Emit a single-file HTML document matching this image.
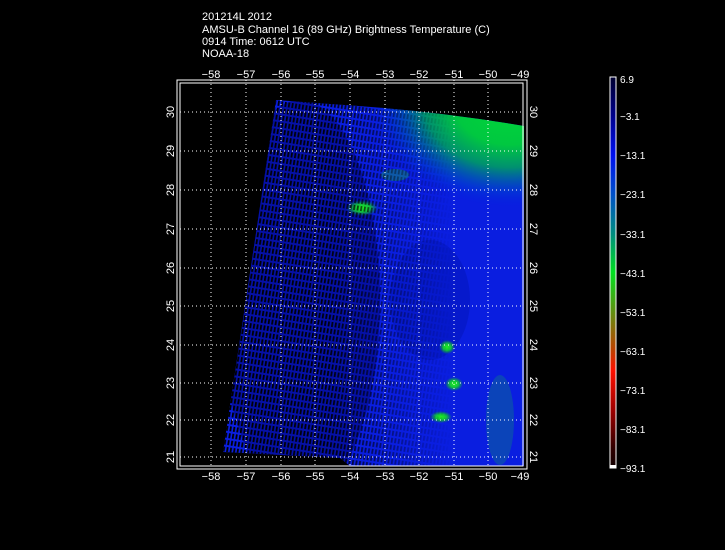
<!DOCTYPE html>
<html><head><meta charset="utf-8"><style>
html,body{margin:0;padding:0;background:#000;}
body{width:725px;height:550px;overflow:hidden;position:relative;}
</style></head><body>
<svg width="725" height="550" viewBox="0 0 725 550" xmlns="http://www.w3.org/2000/svg" style="position:absolute;left:0;top:0">
<defs>
<linearGradient id="cb" x1="0" y1="0" x2="0" y2="1">
<stop offset="0" stop-color="#000030"/>
<stop offset="0.1" stop-color="#00008c"/>
<stop offset="0.2" stop-color="#0010f0"/>
<stop offset="0.3" stop-color="#0050c8"/>
<stop offset="0.4" stop-color="#008c80"/>
<stop offset="0.5" stop-color="#00e020"/>
<stop offset="0.6" stop-color="#609010"/>
<stop offset="0.7" stop-color="#c04000"/>
<stop offset="0.75" stop-color="#ff1000"/>
<stop offset="0.85" stop-color="#a00000"/>
<stop offset="0.95" stop-color="#300000"/>
<stop offset="1" stop-color="#100000"/>
</linearGradient>
<radialGradient id="gr" cx="510" cy="110" r="140" gradientUnits="userSpaceOnUse" gradientTransform="translate(0,-10) scale(1 0.75) translate(0,40)">
<stop offset="0" stop-color="#00d838"/>
<stop offset="0.4" stop-color="#00c840"/>
<stop offset="0.62" stop-color="#009070"/>
<stop offset="0.85" stop-color="#0040d0" stop-opacity="0.6"/>
<stop offset="1" stop-color="#0020e0" stop-opacity="0"/>
</radialGradient>
<radialGradient id="sp" r="0.5"><stop offset="0" stop-color="#20f020"/><stop offset="0.5" stop-color="#10c040"/><stop offset="1" stop-color="#10a040" stop-opacity="0"/></radialGradient>
<pattern id="st" width="3.5" height="7" patternUnits="userSpaceOnUse" patternTransform="rotate(9)">
<rect width="1.8" height="5" fill="#000"/>
</pattern>
<linearGradient id="fade" x1="0" y1="0" x2="1" y2="0">
<stop offset="0" stop-color="#fff"/><stop offset="0.35" stop-color="#fff" stop-opacity="0.9"/><stop offset="0.6" stop-color="#fff" stop-opacity="0.3"/><stop offset="0.75" stop-color="#fff" stop-opacity="0"/>
</linearGradient>
<mask id="m"><rect x="220" y="95" width="310" height="380" fill="url(#fade)"/></mask>
<clipPath id="dc"><path d="M276,100 L330,104 Q430,110 524,126 L524,466 L350,466 L340,458 L223,452 Z"/></clipPath>
</defs>
<g clip-path="url(#dc)">
<rect x="200" y="90" width="340" height="390" fill="#0a1ee0"/>
<ellipse cx="300" cy="300" rx="80" ry="200" fill="#000060" opacity="0.45"/>
<ellipse cx="430" cy="300" rx="40" ry="60" fill="#0010a0" opacity="0.3"/>
<rect x="300" y="90" width="240" height="250" fill="url(#gr)"/>
<ellipse cx="362" cy="208" rx="16" ry="8" fill="url(#sp)"/>
<ellipse cx="395" cy="175" rx="14" ry="6" fill="#108080" opacity="0.6"/>
<ellipse cx="447" cy="347" rx="8" ry="7" fill="url(#sp)"/>
<ellipse cx="454" cy="384" rx="9" ry="7" fill="url(#sp)"/>
<ellipse cx="441" cy="417" rx="11" ry="6" fill="url(#sp)"/>
<ellipse cx="500" cy="420" rx="14" ry="45" fill="#10a060" opacity="0.3"/>
<rect x="200" y="90" width="340" height="390" fill="url(#st)" mask="url(#m)"/>
</g>
<g stroke="#fff" stroke-width="1" stroke-dasharray="1,3" fill="none">
<path d="M211,80V466M246,80V466M281,80V466M315,80V466M350,80V466M385,80V466M419,80V466M454,80V466M488,80V466"/>
<path d="M180,112H523M180,151H523M180,190H523M180,229H523M180,268H523M180,306H523M180,345H523M180,383H523M180,420H523M180,457H523"/>
</g>
<rect x="177" y="80" width="350" height="389" fill="none" stroke="#fff" stroke-width="1"/>
<rect x="180" y="83" width="343" height="383" fill="none" stroke="#fff" stroke-width="1"/>
<g font-family="Liberation Sans, sans-serif" font-size="11" fill="#fff">
<text x="202" y="20">201214L 2012</text>
<text x="202" y="33">AMSU-B Channel 16 (89 GHz) Brightness Temperature (C)</text>
<text x="202" y="45">0914 Time: 0612 UTC</text>
<text x="202" y="57">NOAA-18</text>
<g text-anchor="middle">
<text x="211" y="78">−58</text><text x="246" y="78">−57</text><text x="281" y="78">−56</text><text x="315" y="78">−55</text><text x="350" y="78">−54</text><text x="385" y="78">−53</text><text x="419" y="78">−52</text><text x="454" y="78">−51</text><text x="488" y="78">−50</text><text x="520" y="78">−49</text>
<text x="211" y="480">−58</text><text x="246" y="480">−57</text><text x="281" y="480">−56</text><text x="315" y="480">−55</text><text x="350" y="480">−54</text><text x="385" y="480">−53</text><text x="419" y="480">−52</text><text x="454" y="480">−51</text><text x="488" y="480">−50</text><text x="520" y="480">−49</text>
</g>
<g text-anchor="middle">
<text transform="translate(174,112) rotate(-90)">30</text><text transform="translate(174,151) rotate(-90)">29</text><text transform="translate(174,190) rotate(-90)">28</text><text transform="translate(174,229) rotate(-90)">27</text><text transform="translate(174,268) rotate(-90)">26</text><text transform="translate(174,306) rotate(-90)">25</text><text transform="translate(174,345) rotate(-90)">24</text><text transform="translate(174,383) rotate(-90)">23</text><text transform="translate(174,420) rotate(-90)">22</text><text transform="translate(174,457) rotate(-90)">21</text>
<text transform="translate(530,112) rotate(90)">30</text><text transform="translate(530,151) rotate(90)">29</text><text transform="translate(530,190) rotate(90)">28</text><text transform="translate(530,229) rotate(90)">27</text><text transform="translate(530,268) rotate(90)">26</text><text transform="translate(530,306) rotate(90)">25</text><text transform="translate(530,345) rotate(90)">24</text><text transform="translate(530,383) rotate(90)">23</text><text transform="translate(530,420) rotate(90)">22</text><text transform="translate(530,457) rotate(90)">21</text>
</g>
<g font-size="10">
<text x="620" y="83">6.9</text><text x="620" y="120">−3.1</text><text x="620" y="159">−13.1</text><text x="620" y="198">−23.1</text><text x="620" y="238">−33.1</text><text x="620" y="277">−43.1</text><text x="620" y="316">−53.1</text><text x="620" y="355">−63.1</text><text x="620" y="394">−73.1</text><text x="620" y="433">−83.1</text><text x="620" y="472">−93.1</text>
</g>
</g>
<rect x="610" y="77" width="6" height="391" fill="url(#cb)" stroke="#fff" stroke-width="1"/>
<rect x="610" y="465" width="6" height="3" fill="#fff"/>
</svg>
</body></html>
